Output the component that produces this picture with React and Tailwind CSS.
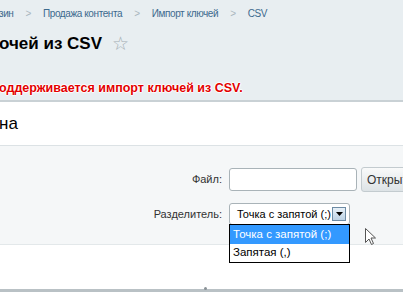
import React from "react";

export default function App() {
  return (
    <div className="relative w-[403px] h-[294px] overflow-hidden bg-white font-['Liberation_Sans',Arial,sans-serif] text-black">
      {/* header */}
      <div className="h-[102px] bg-[#e8eef1] border-b-2 border-[#c9d1d5]">
        <div className="flex items-center h-[27px] text-[10px] tracking-[-0.4px] text-[#3d6a8e] whitespace-nowrap">
          <span className="ml-[-1px]">зин</span>
          <span className="mx-[12px] text-[#a9b6be]">&gt;</span>
          <span>Продажа контента</span>
          <span className="mx-[12px] text-[#a9b6be]">&gt;</span>
          <span>Импорт ключей</span>
          <span className="mx-[12px] text-[#a9b6be]">&gt;</span>
          <span>CSV</span>
        </div>
        <div className="flex items-center h-[32px] whitespace-nowrap">
          <span className="ml-[-1px] text-[17px] font-bold leading-none">очей из CSV</span>
          <span className="ml-[10px] text-[19px] leading-none text-[#a3adb3]">☆</span>
        </div>
        <div className="mt-[20px] ml-[-1px] text-[12.5px] font-bold text-[#e30000] whitespace-nowrap [text-shadow:0_1px_1px_#fff,0_-1px_1px_#fff,1px_0_1px_#fff,-1px_0_1px_#fff]">
          оддерживается импорт ключей из CSV.
        </div>
      </div>
      {/* tab title */}
      <div className="h-[44px] flex items-center border-b border-[#dce2e5] bg-white">
        <span className="ml-[-1px] text-[17px] leading-none">на</span>
      </div>
      {/* form */}
      <div className="relative h-[99px] bg-[#f5f7f8] border-b border-[#e3e8ea] pt-[21px]">
        <div className="grid grid-cols-[222px_1fr] gap-x-[7px] gap-y-[11px] items-center text-[11px]">
          <div className="text-right text-[#333]">Файл:</div>
          <div className="flex items-center gap-[4px]">
            <div className="w-[128px] h-[23px] bg-white border border-[#a9b3b8] rounded-[3px]" />
            <div className="h-[25px] px-[5px] flex items-center border border-[#c3cbcf] rounded-[3px] bg-gradient-to-b from-[#f9fafa] to-[#dde3e6] text-[12px] text-[#333] whitespace-nowrap">
              Открыть
            </div>
          </div>
          <div className="text-right text-[#333]">Разделитель:</div>
          <div>
            <div className="w-[121px] h-[22px] bg-white border border-[#a9b3b8] rounded-[3px] flex items-center pl-[7px] pr-[3px] text-[11px] text-black whitespace-nowrap">
              <span className="flex-1">Точка с запятой (;)</span>
              <span className="w-[14px] h-[14px] border border-[#6d8ba4] bg-gradient-to-b from-[#e8f1f8] to-[#bcd2e4] flex items-center justify-center">
                <svg width="7" height="4" viewBox="0 0 7 4">
                  <path d="M0 0h7L3.5 4z" fill="#000" />
                </svg>
              </span>
            </div>
          </div>
        </div>
        {/* dropdown list */}
        <div className="absolute left-[229px] top-[78px] w-[121px] bg-white border border-black text-[11.5px] whitespace-nowrap z-10">
          <div className="h-[19px] bg-[#3399ff] text-white flex items-center pl-[3px]">Точка с запятой (;)</div>
          <div className="h-[18px] flex items-center pl-[3px]">Запятая (,)</div>
        </div>
        {/* cursor */}
        <svg className="absolute left-[365px] top-[82px] z-10" width="12" height="17" viewBox="0 0 12 17">
          <path d="M0.5 0.5V14.5L4 11L6.5 16.5L8.5 15.5L6 10H10.5Z" fill="#fff" stroke="#555" strokeWidth="1" />
        </svg>
      </div>
      {/* bottom */}
      <div className="h-[44px] bg-white" />
      <div className="h-[3px] bg-[#b9c1c5] relative">
        <div className="absolute left-[204px] top-[-2px] w-[3px] h-[3px] rounded-full bg-[#8a9297]" />
      </div>
    </div>
  );
}
